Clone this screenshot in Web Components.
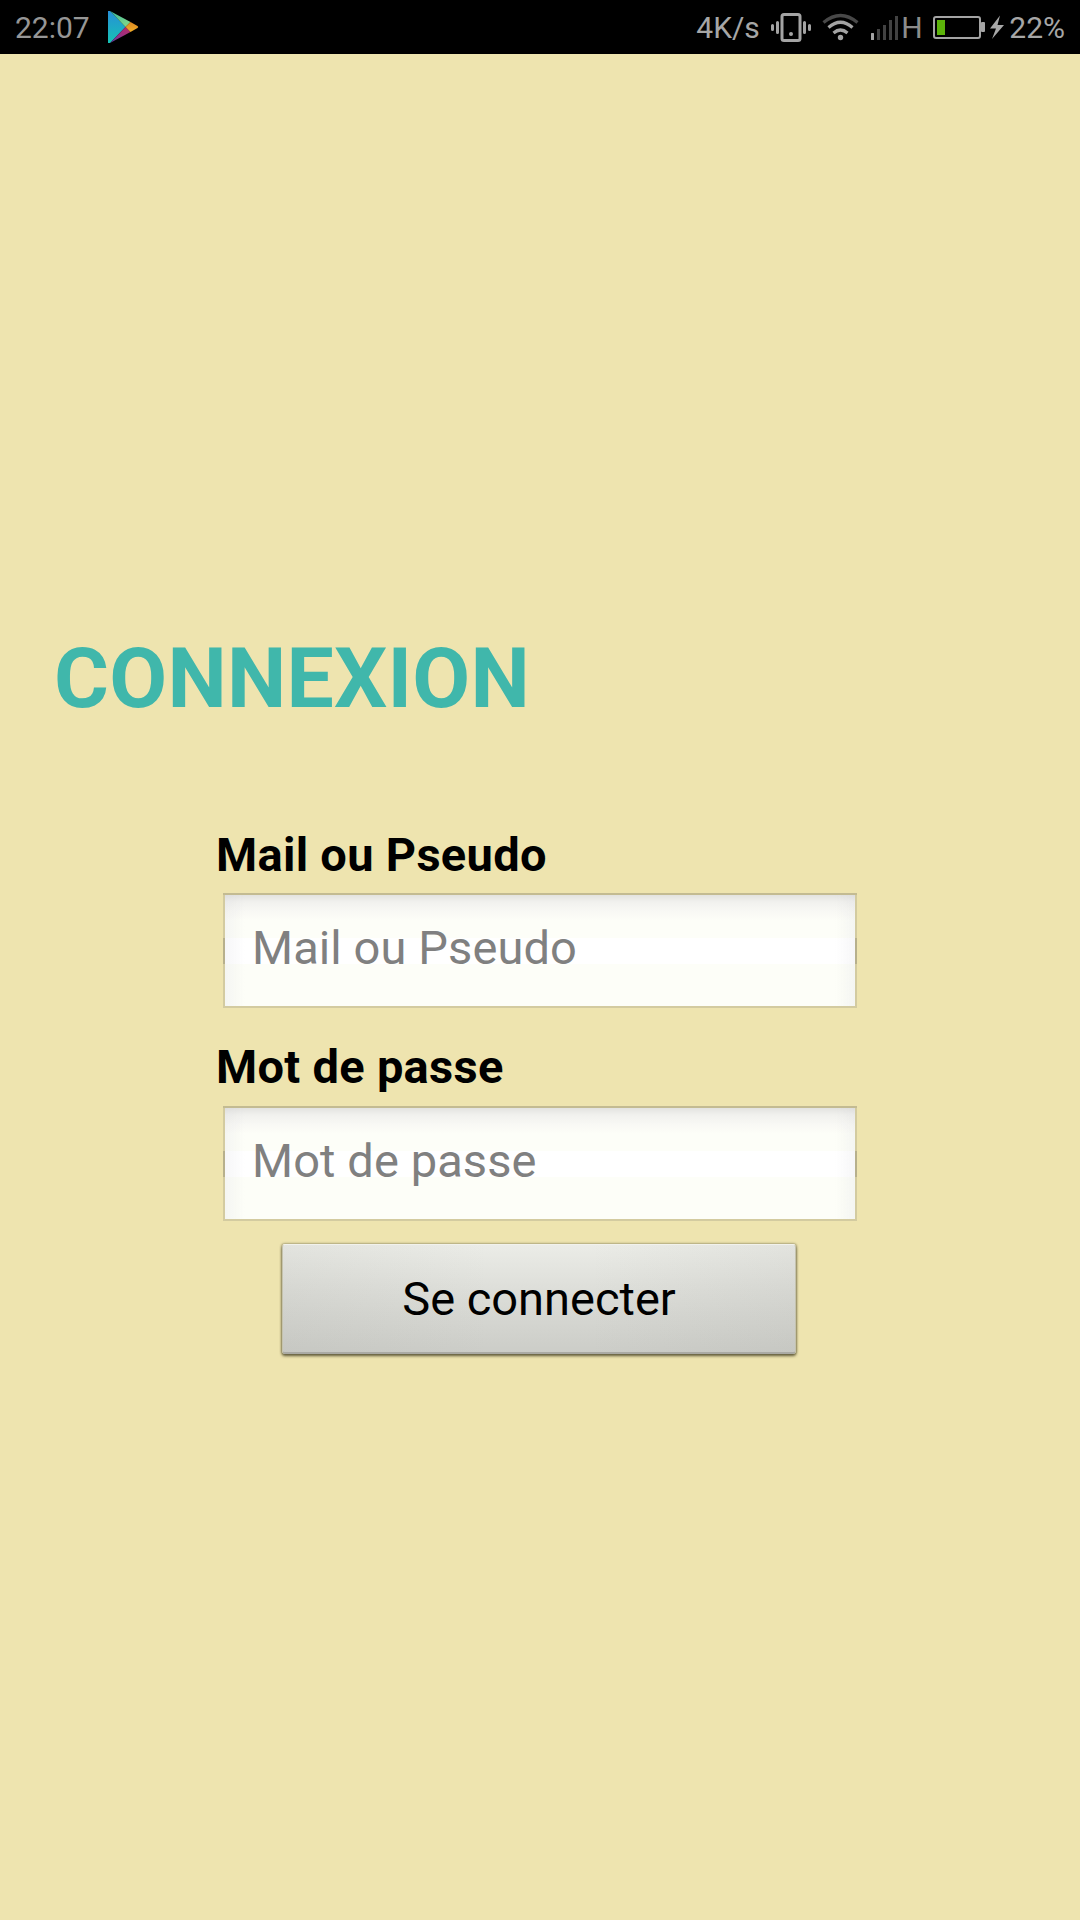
<!DOCTYPE html>
<html lang="fr">
<head>
<meta charset="utf-8">
<title>Connexion</title>
<style>
    body {
        margin: 0;
        background: #eee4af;
        font-family: Roboto, "Liberation Sans", sans-serif;
    }
</style>
</head>
<body>
<login-page></login-page>

<script>
class BaseElement extends HTMLElement {
    constructor() {
        super();
        this.attachShadow({ mode: 'open' });
        const template = document.createElement('template');
        template.innerHTML = this.constructor.templateContent;
        this.shadowRoot.appendChild(template.content.cloneNode(true));
    }
}

class StatusBar extends BaseElement {
    static templateContent = `
        <style>
            :host {
                display: flex;
                align-items: center;
                justify-content: space-between;
                box-sizing: border-box;
                height: 54px;
                padding: 0 15px;
                background: #000;
                color: #a6a6a6;
                font-size: 30px;
                line-height: 52px;
            }
            .group {
                display: flex;
                align-items: center;
                height: 54px;
            }
            svg {
                display: block;
                flex: none;
            }
            span {
                padding-top: 2px;
            }
            .time {
                color: #969696;
                width: 93px;
            }
            .speed {
                width: 74px;
            }
            .network {
                color: #8c8c8c;
                width: 31px;
            }
        </style>
        <div class="group">
            <span class="time">22:07</span>
            <svg width="31" height="54" viewBox="0 0 31 54">
                <defs>
                    <linearGradient id="blue" x1="0" y1="0" x2="0" y2="1">
                        <stop offset="0" stop-color="#268fd8"/>
                        <stop offset="1" stop-color="#16c2b4"/>
                    </linearGradient>
                    <linearGradient id="orange" x1="0" y1="0" x2="0" y2="1">
                        <stop offset="0" stop-color="#dc8822"/>
                        <stop offset="1" stop-color="#f0ad28"/>
                    </linearGradient>
                    <linearGradient id="green" x1="0" y1="0" x2="1" y2="1">
                        <stop offset="0" stop-color="#36b7a0"/>
                        <stop offset="1" stop-color="#8bdc83"/>
                    </linearGradient>
                    <linearGradient id="pink" x1="0" y1="1" x2="1" y2="0">
                        <stop offset="0" stop-color="#5c3fa8"/>
                        <stop offset="0.6" stop-color="#a02e7c"/>
                        <stop offset="1" stop-color="#b52b68"/>
                    </linearGradient>
                </defs>
                <path d="M0 11h2L17.5 27 2 43H0z" fill="url(#blue)"/>
                <path d="M2 11L22.5 22 17.5 27z" fill="url(#green)"/>
                <path d="M2 43L22.5 32 17.5 27z" fill="url(#pink)"/>
                <path d="M22.5 22l7 4q1.500 1 0 2l-7 4-5-5z" fill="url(#orange)"/>
            </svg>
        </div>
        <div class="group">
            <span class="speed">4K/s</span>
            <!-- vibrate -->
            <svg width="42" height="54" viewBox="0 0 42 54" fill="none" stroke="#a4a4a4">
                <rect x="12" y="14.500" width="18" height="26" rx="2" stroke-width="3"/>
                <circle cx="21" cy="34" r="2" fill="#a4a4a4" stroke="none"/>
                <path d="M2.500 25.500v4M7.500 22.500v10M34.500 22.500v10M39.500 25.500v4" stroke-width="3" stroke-linecap="round"/>
            </svg>
            <!-- wifi -->
            <svg width="59" height="54" viewBox="1 0 59 54" fill="none" stroke="#a4a4a4" stroke-width="3.200">
                <path d="M12.500 22.500Q29.500 8.500 46.500 22.500" stroke="#484848"/>
                <path d="M17.500 27.500Q29.500 17 41.500 27.500"/>
                <path d="M22.500 33Q29.500 27 36.500 33"/>
                <circle cx="29.500" cy="37.500" r="2.700" fill="#a4a4a4" stroke="none"/>
            </svg>
            <!-- signal -->
            <svg width="30" height="54" viewBox="0 0 30 54">
                <rect x="0" y="33" width="3" height="7" rx="0.500" fill="#a4a4a4"/>
                <path d="M6 29h3v11H6zM12 25h3v15h-3zM18 20h3v20h-3zM24 16h3v24h-3z" fill="#424242"/>
            </svg>
            <span class="network">H</span>
            <!-- battery and charging bolt -->
            <svg width="77" height="54" viewBox="0 0 77 54">
                <rect x="2" y="17" width="46" height="21" rx="2" fill="none" stroke="#a4a4a4" stroke-width="2"/>
                <rect x="49" y="22" width="4" height="10" rx="1" fill="#a4a4a4"/>
                <rect x="5" y="20" width="8" height="15" fill="#5cb30a"/>
                <path d="M68 15.500L58 28.500h6l-4 10.500 12-14h-6.500z" fill="#a8a8a8"/>
            </svg>
            <span>22%</span>
        </div>
    `;
}

class PageTitle extends BaseElement {
    static templateContent = `
        <style>
            :host {
                display: block;
                color: #40b7ab;
                font-size: 84px;
                font-weight: bold;
                letter-spacing: 0.25px;
                line-height: 98px;
            }
        </style>
        <slot></slot>
    `;
}

class FormField extends BaseElement {
    static templateContent = `
        <style>
            :host {
                display: block;
                font-size: 47px;
                line-height: 56px;
            }
            .label {
                color: #000;
                font-weight: bold;
                letter-spacing: 0.3px;
                margin-bottom: var(--label-gap, 10px);
            }
            .box {
                box-sizing: border-box;
                width: 634px;
                height: 115px;
                margin-left: 7px;
                padding: 25px 27px 0;
                border: 2px solid #d3cba0;
                /* the side borders get darker next to the white band */
                border-image: linear-gradient(#c3bb92 0, #c3bb92 2px, #d3cba0 2px, #d3cba0 45px, #b7b08c 45px, #b7b08c 71px, #d3cba0 71px) 2;
                color: #808080;
                letter-spacing: 0.1px;
                background:
                    linear-gradient(90deg, rgba(190,190,200,.13), transparent 20px, transparent 610px, rgba(190,190,200,.13)),
                    linear-gradient(#e3e3e0 0, #f1f1ee 7px, #f8f8f4 16px, #fdfef8 26px, #fdfef8 43px, #fff 43px, #fff 69px, #fdfef8 69px);
            }
        </style>
        <div class="label"><slot></slot></div>
        <div class="box"><span class="hint"></span></div>
    `;

    connectedCallback() {
        this.shadowRoot.querySelector('.hint').textContent = this.getAttribute('hint');
    }
}

class SubmitButton extends BaseElement {
    static templateContent = `
        <style>
            :host {
                display: block;
            }
            button {
                display: block;
                box-sizing: border-box;
                width: 514px;
                height: 110px;
                padding: 1px 0 0;
                border: 1px solid #c5c3ae;
                border-top-color: #f2f2ec;
                border-bottom: 2px solid #aaaaa4;
                border-radius: 3px;
                background:
                    linear-gradient(90deg, rgba(150,150,145,.1), transparent 40%, transparent 60%, rgba(150,150,145,.1)),
                    linear-gradient(#ebece7, #dcddd8 45%, #cccdc8);
                box-shadow: 0 0 2px 1px rgba(90,85,55,.4), 0 2px 3px rgba(50,45,20,.7);
                color: #000;
                font-family: inherit;
                font-size: 47px;
                line-height: 56px;
            }
        </style>
        <button type="button"><slot></slot></button>
    `;
}

class LoginPage extends BaseElement {
    static templateContent = `
        <style>
            :host {
                display: block;
                height: 1920px;
                overflow: hidden;
            }
            main {
                padding: 576px 0 0 54px;
            }
            form {
                display: flex;
                flex-direction: column;
                gap: 32px;
                margin: 99px 0 0 162px;
            }
            .password {
                --label-gap: 11px;
                margin-top: -1px;
            }
            submit-button {
                margin: -9px 0 0 66px;
            }
        </style>
        <status-bar></status-bar>
        <main>
            <page-title>CONNEXION</page-title>
            <form>
                <form-field hint="Mail ou Pseudo">Mail ou Pseudo</form-field>
                <form-field class="password" hint="Mot de passe">Mot de passe</form-field>
                <submit-button>Se connecter</submit-button>
            </form>
        </main>
    `;
}

customElements.define('status-bar', StatusBar);
customElements.define('page-title', PageTitle);
customElements.define('form-field', FormField);
customElements.define('submit-button', SubmitButton);
customElements.define('login-page', LoginPage);
</script>
</body>
</html>
